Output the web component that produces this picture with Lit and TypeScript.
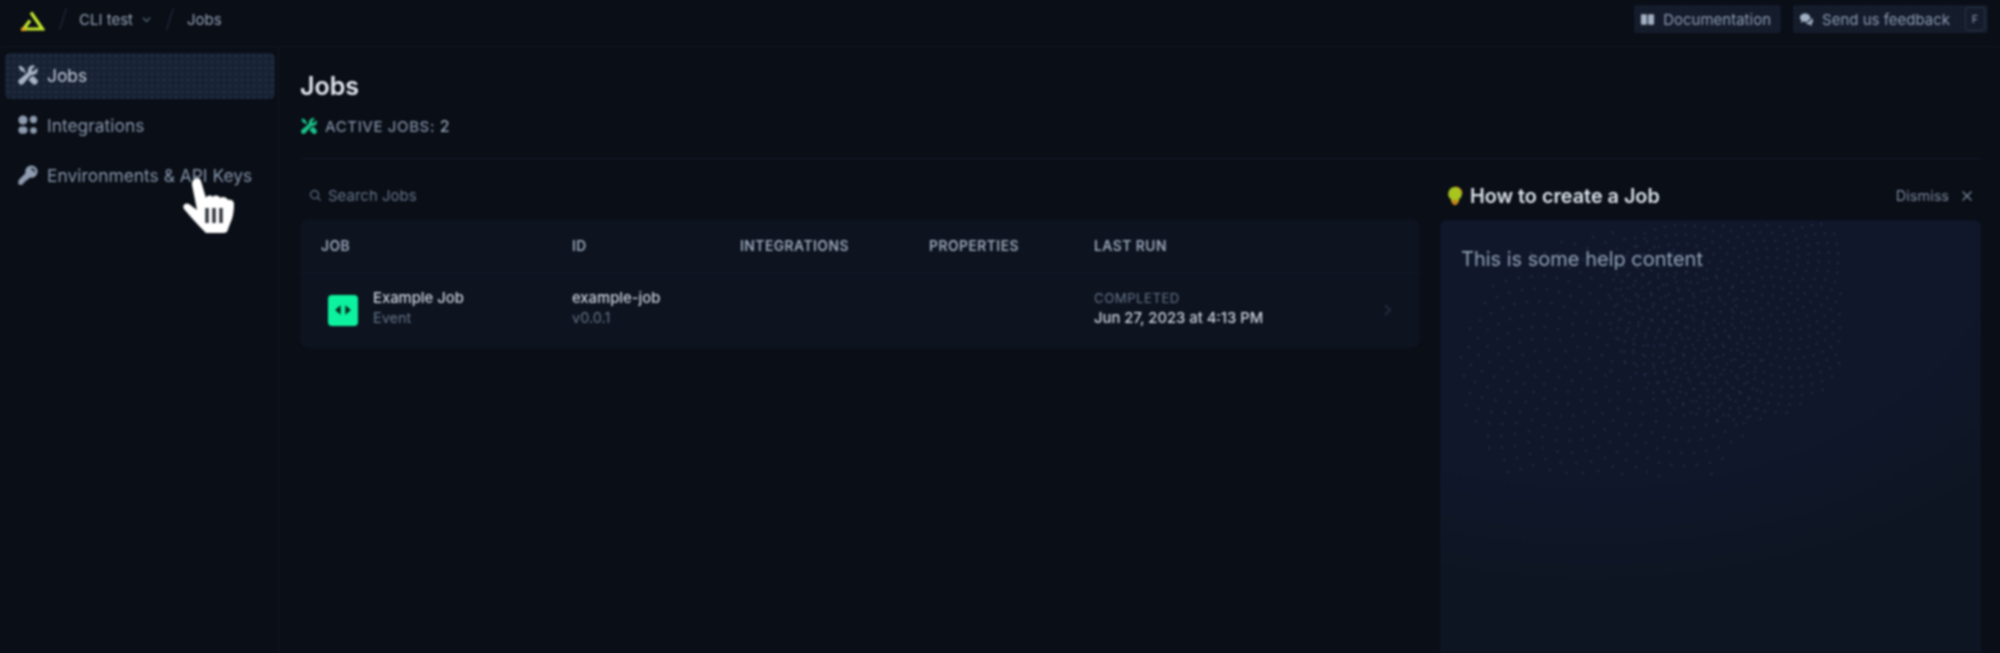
import { LitElement, html, css, svg } from "lit";
import { customElement } from "lit/decorators.js";

const wrench = html`<svg viewBox="0 0 24 24" fill="currentColor"><path d="M12 6.75a5.25 5.25 0 0 1 6.775-5.025.75.75 0 0 1 .313 1.248l-3.32 3.319c.063.475.276.934.641 1.299.365.365.824.578 1.3.64l3.318-3.319a.75.75 0 0 1 1.248.313 5.25 5.25 0 0 1-5.472 6.756c-1.018-.086-1.87.1-2.309.634L7.344 21.3A3.298 3.298 0 1 1 2.7 16.657l8.684-7.151c.533-.44.72-1.291.634-2.309A5.342 5.342 0 0 1 12 6.75Z"/><path d="m10.076 8.64-2.201-2.2V4.874a.75.75 0 0 0-.364-.643l-3.75-2.25a.75.75 0 0 0-.916.113l-.75.75a.75.75 0 0 0-.113.916l2.25 3.75a.75.75 0 0 0 .643.364h1.564l2.062 2.062 1.575-1.297Z"/><path d="m12.556 17.329 4.183 4.182a3.375 3.375 0 0 0 4.773-4.773l-3.306-3.305a6.803 6.803 0 0 1-1.53.043c-.394-.034-.682-.006-.867.042a.589.589 0 0 0-.167.063l-3.086 3.748Z"/></svg>`;

const key = html`<svg viewBox="0 0 24 24" fill="currentColor"><path fill-rule="evenodd" d="M15.75 1.5a6.75 6.75 0 0 0-6.651 7.906c.067.39-.032.717-.221.906l-6.5 6.499a3 3 0 0 0-.878 2.121v2.818c0 .414.336.75.75.75H6a.75.75 0 0 0 .75-.75v-1.5h1.5A.75.75 0 0 0 9 19.5V18h1.5a.75.75 0 0 0 .53-.22l2.658-2.658c.19-.189.517-.288.906-.22A6.75 6.75 0 1 0 15.75 1.5Zm0 3a.75.75 0 0 0 0 1.5A2.25 2.25 0 0 1 18 8.25a.75.75 0 0 0 1.5 0 3.75 3.75 0 0 0-3.75-3.75Z"/></svg>`;

const blocks = html`<svg viewBox="0 0 24 24" fill="currentColor"><circle cx="6.500" cy="6.500" r="5"/><circle cx="18" cy="6" r="4"/><rect x="1.500" y="13.500" width="10" height="8" rx="4"/><circle cx="18" cy="18" r="3.600"/></svg>`;

/** Phyllotaxis dot fields that imitate the stippled texture of the help panel. */
function swirl(cx: number, cy: number, count: number, scale: number, minR: number) {
  const out = [];
  for (let i = 0; i < count; i++) {
    const r = scale * Math.sqrt(i);
    if (r < minR) continue;
    const a = i * 2.39996;
    const x = cx + r * Math.cos(a);
    const y = cy + r * Math.sin(a) * 0.92;
    if (x < 8 || y < 2 || x > 400 || y > 255) continue;
    out.push(svg`<circle cx=${x.toFixed(1)} cy=${y.toFixed(1)} r="0.9"/>`);
  }
  return out;
}

@customElement("app-root")
export class AppRoot extends LitElement {
  static styles = css`
    :host {
      display: block;
      height: 100vh;
      overflow: hidden;
      background: #0a0e16;
      font-family: Inter, "Noto Sans", sans-serif;
      color: #94a3b8;
    }
    .page { position: relative; height: 100%; display: flex; flex-direction: column; filter: blur(0.8px); }
    svg { display: block; }

    header {
      height: 47px; box-sizing: border-box; flex: none;
      display: flex; align-items: center; justify-content: space-between;
      padding: 0 12px 8px 20px;
      border-bottom: 1px solid #111826;
    }
    .crumbs { display: flex; align-items: center; font-size: 15px; }
    .logo { width: 25px; height: 20px; margin-top: 3px; }
    .slash { width: 10px; height: 24px; color: #1e293b; }
    .s1 { margin: 0 11px 0 13px; }
    .s2 { margin: 0 12px 0 13px; }
    .chev { width: 11px; height: 11px; margin-left: 8px; color: #64748b; }
    .actions { display: flex; gap: 12px; }
    .tbtn {
      height: 28px; box-sizing: border-box; display: flex; align-items: center; gap: 8px;
      padding: 0 10px 0 6px; border-radius: 3px; font-size: 15px;
      background-color: #141c2b;
      background-image: radial-gradient(#232e42 0.6px, transparent 0.8px);
      background-size: 5px 5px;
      color: #8c9ab0;
    }
    .tbtn svg { width: 15px; height: 15px; color: #a3b0c4; }
    .kbd {
      width: 20px; height: 24px; box-sizing: border-box; border: 1px solid #2a3548; border-radius: 3px;
      display: flex; align-items: center; justify-content: center; font-size: 11px; margin: 0 -7px 0 7px;
    }

    .body { flex: 1; display: flex; min-height: 0; }
    aside {
      width: 279px; box-sizing: border-box; flex: none; padding: 6px 5px 0 5px;
      border-right: 1px solid #111826;
      display: flex; flex-direction: column; gap: 4px;
    }
    .nav {
      height: 46px; display: flex; align-items: center; gap: 8px; padding: 0 0 2px 12px;
      border-radius: 5px; font-size: 17.4px; color: #8695ab; box-sizing: border-box; white-space: nowrap;
    }
    .nav svg { width: 22px; height: 22px; flex: none; color: #8f9db1; }
    .nav.on {
      color: #c6cfdc; width: 270px;
      background-color: #182234;
      background-image: radial-gradient(#27344a 0.7px, transparent 0.9px);
      background-size: 6px 6px;
    }
    .nav.on svg { color: #a9b5c6; }

    main { flex: 1; min-width: 0; padding: 0 19px 0 21px; display: flex; flex-direction: column; }
    h1 { margin: 22.500px 0 0; font-size: 25px; line-height: 32px; font-weight: 600; color: #e2e8f0; }
    .meta { display: flex; align-items: center; gap: 7px; margin-top: 14px; font-size: 15px; letter-spacing: 0.6px; color: #7f8da3; font-weight: 500; }
    .meta svg { width: 18px; height: 18px; color: #1bc48a; }
    .meta b { font-weight: 500; color: #94a3b8; font-size: 16px; }
    .rule { height: 1px; background: #151c2e; margin-top: 22.500px; }

    .cols { flex: 1; display: flex; gap: 20px; min-height: 0; }
    .left { width: 1120px; flex: none; }
    .search { height: 60px; box-sizing: border-box; padding: 12px 0 0 9px; display: flex; align-items: center; gap: 6px; font-size: 15px; color: #64748b; }
    .search svg { width: 13px; height: 13px; }
    .table { background: #0d131f; border-radius: 8px; }
    .row {
      display: grid; grid-template-columns: 272px 168px 189px 165px 1fr 40px;
      align-items: center;
    }
    .head { height: 54px; box-sizing: border-box; border-bottom: 1px solid #121a29; font-size: 13.8px; font-weight: 600; letter-spacing: 0.5px; color: #9aa7ba; }
    .head span:first-child { padding-left: 21px; }
    .data { height: 75px; box-sizing: border-box; padding-bottom: 5px; }
    .job { display: flex; align-items: center; gap: 15px; padding-left: 28px; }
    .badge { width: 30px; height: 31px; border-radius: 4px; background: #0cf29e; color: #0b1f1c; display: flex; align-items: center; justify-content: center; position: relative; top: 2px; }
    .badge svg { width: 24px; height: 24px; }
    .t1 { font-size: 14.8px; line-height: 20px; font-weight: 500; color: #cdd5e0; white-space: nowrap; }
    .t2 { font-size: 14.500px; line-height: 20px; color: #67758a; }
    .t3 { font-size: 13.200px; line-height: 20px; letter-spacing: 0.5px; color: #67758a; }
    .go { color: #2c3749; }
    .go svg { width: 14px; height: 14px; position: relative; top: 2px; }

    .right { flex: 1; min-width: 0; display: flex; flex-direction: column; }
    .help-head { height: 61px; flex: none; display: flex; align-items: center; justify-content: space-between; padding: 12px 8px 0 7px; box-sizing: border-box; }
    .help-title { display: flex; align-items: center; gap: 7px; font-size: 19.800px; font-weight: 600; color: #dbe2ec; }
    .help-title svg { width: 16px; height: 20px; }
    .dismiss { display: flex; align-items: center; gap: 12px; font-size: 14.500px; color: #7a889d; }
    .dismiss svg { width: 12px; height: 12px; }
    .panel {
      position: relative; flex: 1; overflow: hidden;
      border-radius: 6px 6px 0 0;
      border: 1px solid #0f1629; border-bottom: 0;
      background: radial-gradient(ellipse 560px 365px at 28% 0%, #10172b 0%, #10172b 70%, #0e1522 100%), #0e1520;
    }
    .dots { position: absolute; left: 0; top: 0; width: 100%; height: 100%; fill: #2d3c59; }
    .panel p { position: relative; margin: 0; padding: 25px 20px; font-size: 20px; line-height: 26px; color: #94a3b8; }

    .hand { position: absolute; left: 181px; top: 176px; width: 56px; height: 58px; }
  `;

  render() {
    return html`<div class="page">
      <header>
        <div class="crumbs">
          <svg class="logo" viewBox="0 0 25 20" fill="none" stroke-width="3.2">
            <path d="M11 1.500 L22.500 18 H3" stroke="#c6ea2c"/>
            <path d="M3.500 18 L 10 9.500" stroke="#c6ea2c"/>
            <path d="M1 18.400 H6" stroke="#e3a41e"/>
          </svg>
          <svg class="slash s1" viewBox="0 0 10 24" fill="none" stroke="currentColor" stroke-width="1.400"><path d="M8.500 1 1.500 23"/></svg>
          <span>CLI test</span>
          <svg class="chev" viewBox="0 0 12 12" fill="none" stroke="currentColor" stroke-width="1.300"><path d="m2 4 4 4 4-4"/></svg>
          <svg class="slash s2" viewBox="0 0 10 24" fill="none" stroke="currentColor" stroke-width="1.400"><path d="M8.500 1 1.500 23"/></svg>
          <span>Jobs</span>
        </div>
        <div class="actions">
          <div class="tbtn">
            <svg viewBox="0 0 16 16" fill="currentColor"><rect x="1" y="2.500" width="6.400" height="11" rx="1"/><rect x="8.600" y="2.500" width="6.400" height="11" rx="1"/></svg>
            Documentation
          </div>
          <div class="tbtn">
            <svg viewBox="0 0 16 16" fill="currentColor"><path d="M6.500 1.500C3.500 1.500 1 3.400 1 5.800c0 1.200.6 2.200 1.600 3L2 11.500l2.800-1.400c.5.1 1.100.2 1.700.2 3 0 5.500-2 5.500-4.500S9.500 1.500 6.500 1.500Z"/><path d="M13 6.500c0 3-2.700 5-6 5 .9 1.200 2.400 1.900 4 1.900l3 1.600-.6-2.700c.9-.7 1.600-1.700 1.600-2.800 0-1.300-.8-2.300-2-3Z"/></svg>
            Send us feedback
            <span class="kbd">F</span>
          </div>
        </div>
      </header>
      <div class="body">
        <aside>
          <div class="nav on">${wrench}Jobs</div>
          <div class="nav">${blocks}Integrations</div>
          <div class="nav">${key}Environments &amp; API Keys</div>
        </aside>
        <main>
          <h1>Jobs</h1>
          <div class="meta">${wrench}<span>ACTIVE JOBS: <b>2</b></span></div>
          <div class="rule"></div>
          <div class="cols">
            <div class="left">
              <div class="search">
                <svg viewBox="0 0 14 14" fill="none" stroke="currentColor" stroke-width="1.300"><circle cx="6" cy="6" r="4.300"/><path d="m9.300 9.300 3.200 3.200"/></svg>
                Search Jobs
              </div>
              <div class="table">
                <div class="row head">
                  <span>JOB</span><span>ID</span><span>INTEGRATIONS</span><span>PROPERTIES</span><span>LAST RUN</span><span></span>
                </div>
                <div class="row data">
                  <div class="job">
                    <div class="badge">
                      <svg viewBox="0 0 20 20" fill="currentColor"><path d="M8 6v8L3.500 10Z"/><path d="M12 6v8l4.500-4Z"/></svg>
                    </div>
                    <div><div class="t1">Example Job</div><div class="t2">Event</div></div>
                  </div>
                  <div><div class="t1">example-job</div><div class="t2">v0.0.1</div></div>
                  <div></div>
                  <div></div>
                  <div><div class="t3">COMPLETED</div><div class="t1">Jun 27, 2023 at 4:13 PM</div></div>
                  <div class="go"><svg viewBox="0 0 14 14" fill="none" stroke="currentColor" stroke-width="1.300"><path d="m5 2 5 5-5 5"/></svg></div>
                </div>
              </div>
            </div>
            <div class="right">
              <div class="help-head">
                <div class="help-title">
                  <svg viewBox="0 0 16 20"><path d="M8 1a6.800 6.800 0 0 0-4 12.300V16h8v-2.700A6.800 6.800 0 0 0 8 1Z" fill="#a8c41e"/><path d="M5 14h6v3.500L8 19.500 5 17.500Z" fill="#c9851a"/><path d="M8 1a6.800 6.800 0 0 1 6.800 6.800" fill="none" stroke="#d6a51e" stroke-width="1.200"/></svg>
                  How to create a Job
                </div>
                <div class="dismiss">Dismiss
                  <svg viewBox="0 0 12 12" fill="none" stroke="currentColor" stroke-width="1.300"><path d="m1.500 1.500 9 9m0-9-9 9"/></svg>
                </div>
              </div>
              <div class="panel">
                <svg class="dots">
                  ${swirl(295, 85, 520, 5.6, 0)}
                  ${swirl(170, 150, 420, 7.4, 0)}
                </svg>
                <p>This is some help content</p>
              </div>
            </div>
          </div>
        </main>
      </div>
      <svg class="hand" viewBox="0 0 56 58">
        <path d="M14 3c2-2 5-1 6 2l5 17c1-3 5-3 7-1 1-2 6-2 7 1 2-2 7-1 8 2 2-1 6 0 6 4 0 7-1 14-4 20l-3 8-3 1H25l-3-3C16 48 9 40 3 33c-2-3 1-7 5-5l8 6L11 9c-.5-3 1-5 3-6Z" fill="#fff"/>
        <path d="M26 32v15M33 32v15M40 32v15" stroke="#2a2f38" stroke-width="3.400"/>
      </svg>
    </div>`;
  }
}
